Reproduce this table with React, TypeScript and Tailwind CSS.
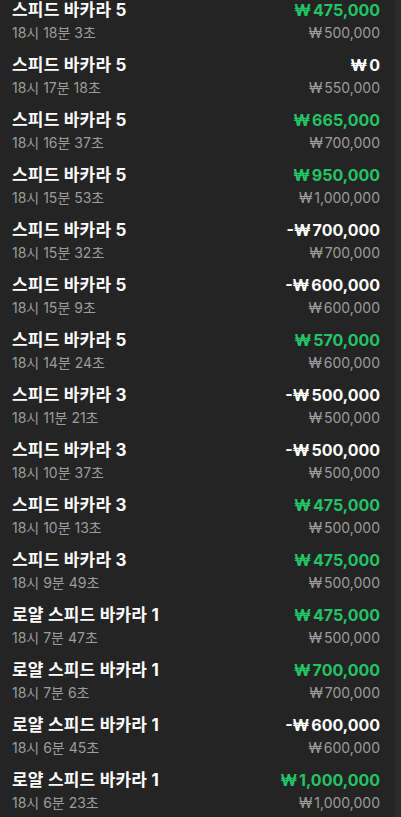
type Bet = {
    game: string;
    time: string;
    result: number;
    stake: number;
};

const bets: Bet[] = [
    { game: '스피드 바카라 5', time: '18시 18분 3초', result: 475000, stake: 500000 },
    { game: '스피드 바카라 5', time: '18시 17분 18초', result: 0, stake: 550000 },
    { game: '스피드 바카라 5', time: '18시 16분 37초', result: 665000, stake: 700000 },
    { game: '스피드 바카라 5', time: '18시 15분 53초', result: 950000, stake: 1000000 },
    { game: '스피드 바카라 5', time: '18시 15분 32초', result: -700000, stake: 700000 },
    { game: '스피드 바카라 5', time: '18시 15분 9초', result: -600000, stake: 600000 },
    { game: '스피드 바카라 5', time: '18시 14분 24초', result: 570000, stake: 600000 },
    { game: '스피드 바카라 3', time: '18시 11분 21초', result: -500000, stake: 500000 },
    { game: '스피드 바카라 3', time: '18시 10분 37초', result: -500000, stake: 500000 },
    { game: '스피드 바카라 3', time: '18시 10분 13초', result: 475000, stake: 500000 },
    { game: '스피드 바카라 3', time: '18시 9분 49초', result: 475000, stake: 500000 },
    { game: '로얄 스피드 바카라 1', time: '18시 7분 47초', result: 475000, stake: 500000 },
    { game: '로얄 스피드 바카라 1', time: '18시 7분 6초', result: 700000, stake: 700000 },
    { game: '로얄 스피드 바카라 1', time: '18시 6분 45초', result: -600000, stake: 600000 },
    { game: '로얄 스피드 바카라 1', time: '18시 6분 23초', result: 1000000, stake: 1000000 },
];

function Won({ value, sign = false }: { value: number; sign?: boolean }) {
    return (
        <span>
            {sign && value < 0 ? '-' : ''}
            <span className="mr-[2px]">₩</span>
            {Math.abs(value).toLocaleString('en-US')}
        </span>
    );
}

export default function App() {
    return (
        <div
            className="flex h-[817px] w-[401px] overflow-hidden bg-[#242424]"
            style={{ fontFamily: "Inter, 'Noto Sans CJK KR', sans-serif" }}
        >
            <div className="flex-1 -mt-[7px]">
                {bets.map((bet, i) => (
                    <div key={i} className="flex items-start justify-between h-[55px] pt-[5px] pl-3 pr-[15px]">
                        <div className="flex flex-col">
                            <span className="text-[17px] leading-[24px] font-bold text-white tracking-[0.2px]">
                                {bet.game}
                            </span>
                            <span className="text-[14px] leading-[21px] text-[#9c9c9c]">{bet.time}</span>
                        </div>
                        <div className="flex flex-col items-end">
                            <span
                                className={
                                    bet.result > 0
                                        ? 'text-[16px] leading-[24px] font-bold text-[#22c565]'
                                        : 'text-[16px] leading-[24px] font-bold text-white'
                                }
                            >
                                <Won value={bet.result} sign />
                            </span>
                            <span className="text-[14px] leading-[21px] text-[#9c9c9c]">
                                <Won value={bet.stake} />
                            </span>
                        </div>
                    </div>
                ))}
            </div>
            {/* scrollbar track */}
            <div className="w-[6px] bg-[#2b2b2b]" />
        </div>
    );
}
